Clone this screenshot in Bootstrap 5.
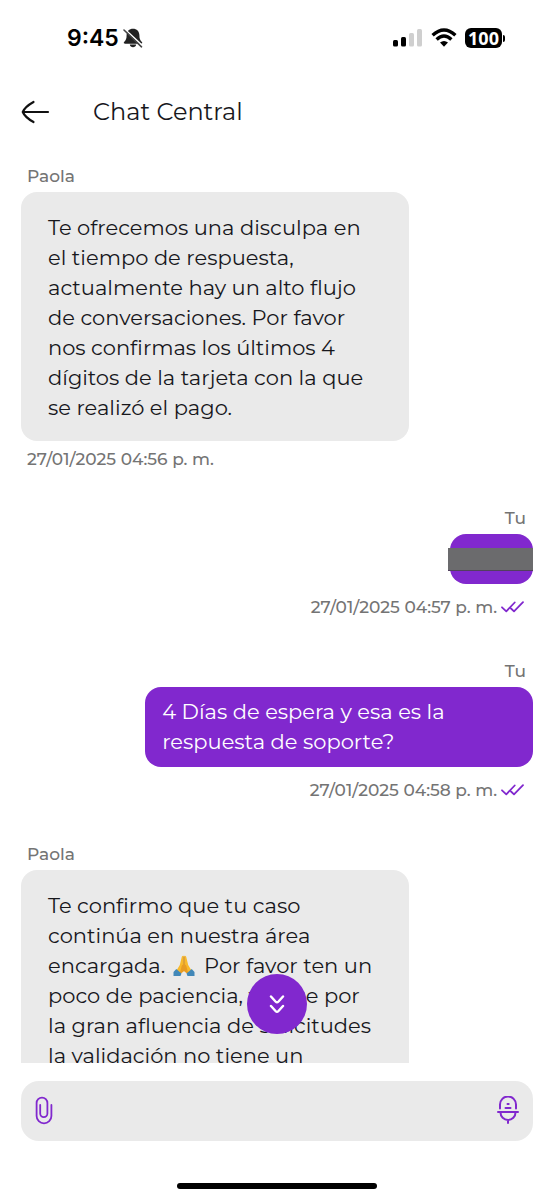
<!DOCTYPE html>
<html lang="es">
<head>
<meta charset="utf-8">
<meta name="viewport" content="width=device-width, initial-scale=1">
<title>Chat Central</title>
<link href="https://cdn.jsdelivr.net/npm/bootstrap@5.3.0/dist/css/bootstrap.min.css" rel="stylesheet">
<style>
  :root { --purple: #8128ce; --bubble: #eaeaea; --ink: #17171c; --muted: #747474; }
  body { font-family: Montserrat, Inter, sans-serif; color: var(--ink); background: #fff; }
  .status-row { padding: 24px 49px 0 67px; height: 76px; }
  .status-icons { height: 28px; }
  .clock { font: 600 23px/28px Inter, sans-serif; color: #000; }
  .battery { width: 37px; height: 20px; border-radius: 6px; background: #000; color: #fff; font: 700 18px/20px "Open Sans", sans-serif; }
  .battery-tip { width: 2px; height: 7px; border-radius: 0 2px 2px 0; background: #000; margin-left: 1px; }
  .title-row { padding: 0 21px; height: 72px; gap: 43px; }
  .title-row h1 { font-size: 24px; line-height: 32px; font-weight: 400; }
  .chat { padding: 18px 21px 0; }
  .meta { font-size: 17px; line-height: 20px; font-weight: 500; color: var(--muted); padding: 0 6px; white-space: nowrap; }
  .bubble { width: 70vw; border-radius: 16px; font-size: 21px; line-height: 30px; margin-top: 6px; white-space: nowrap; }
  .msg-in { margin-bottom: 39px; }
  .msg-in .bubble { background: var(--bubble); padding: 21px 27px 18px; }
  .msg-in .stamp { margin-top: 8px; }
  .msg-out { margin-bottom: 44px; }
  .msg-out .bubble { background: var(--purple); color: #fff; padding: 10px 17px; }
  .msg-out .meta { padding-right: 7px; }
  .msg-out .stamp { margin-top: 13px; padding-right: 9px; gap: 4px; }
  .msg-out .bubble-short { width: 83px; height: 50px; padding: 14px 0 0; }
  .redaction { height: 23px; margin-left: -2px; background: #6b6b6d; border-bottom: 1px solid #51405f; }
  .jump { width: 60px; height: 60px; background: var(--purple); bottom: 29px; }
  .composer { margin: 18px 21px 0; height: 60px; border-radius: 18px; background: var(--bubble); padding: 0 14px; }
  .composer input { min-width: 0; font-size: 21px; }
  .home-area { height: 59px; padding-bottom: 11px; }
  .home-bar { width: 36%; height: 6px; border-radius: 3px; background: #000; }
  svg { display: block; flex: none; }
  svg.prayer { display: inline-block; vertical-align: -4px; margin: 0 4px 0 2px; }
</style>
</head>
<body>
<div class="vh-100 d-flex flex-column overflow-hidden">
  <div class="status-row d-flex justify-content-between align-items-start flex-shrink-0">
    <div class="d-flex align-items-center gap-1">
      <span class="clock">9:45</span>
      <svg width="20" height="20" viewBox="0 0 20 20" aria-hidden="true">
        <path fill="#222" d="M10 .8C6.200.8 3.600 3.500 3.600 7.500c0 3.200-.8 4.800-2.500 6.500-.7.700-.3 1.700.7 1.700h16.400c1 0 1.400-1 .7-1.700-1.700-1.700-2.500-3.300-2.500-6.500C16.400 3.500 13.800.8 10 .8zM6.800 16.500h6.400c-.3 3.700-6.100 3.700-6.400 0z"/>
        <path d="M1 .5 20 18.200" stroke="#fff" stroke-width="1.600"/>
        <path d="M1 2 18.500 18.800" stroke="#444" stroke-width="1.600" stroke-linecap="round"/>
      </svg>
    </div>
    <div class="status-icons d-flex align-items-center">
      <svg class="me-2" width="30" height="20" viewBox="0 0 30 20" aria-hidden="true">
        <rect x="0" y="12" width="5" height="6.500" rx="1.500"/><rect x="8" y="9" width="5" height="9.500" rx="1.500"/>
        <g fill="#cfcfcf"><rect x="16" y="5" width="5" height="13.500" rx="1.500"/><rect x="24" y="1" width="5" height="17.500" rx="1.500"/></g>
      </svg>
      <svg class="me-2" width="26" height="20" viewBox="0 0 26 20" aria-hidden="true">
        <g fill="none" stroke="#000" stroke-width="3.400"><path d="M1.600 7.300Q13-3.200 24.400 7.300"/><path d="M5.600 11.400Q13 4.600 20.400 11.400"/></g>
        <path d="M9 14.500Q13 11.300 17 14.500L13 18.800z"/>
      </svg>
      <span class="battery d-flex align-items-center justify-content-center">100</span><span class="battery-tip"></span>
    </div>
  </div>

  <header class="title-row d-flex align-items-center flex-shrink-0">
    <button type="button" class="btn p-0 border-0" aria-label="Volver">
      <svg width="29" height="24" viewBox="0 0 29 24" fill="none" stroke="#111" stroke-width="2.200" stroke-linecap="round"><path d="M2 12h25M12.500 2C8 4.500 3.200 8.500 1.800 12 3.200 15.500 8 19.500 12.500 22"/></svg>
    </button>
    <h1 class="m-0">Chat Central</h1>
  </header>

  <div class="flex-grow-1 position-relative overflow-hidden">
    <main class="chat d-flex flex-column">
      <article class="msg-in d-flex flex-column align-items-start">
        <div class="meta">Paola</div>
        <div class="bubble">Te ofrecemos una disculpa en<br>el tiempo de respuesta,<br>actualmente hay un alto flujo<br>de conversaciones. Por favor<br>nos confirmas los últimos 4<br>dígitos de la tarjeta con la que<br>se realizó el pago.</div>
        <time class="meta stamp">27/01/2025 04:56 p. m.</time>
      </article>

      <article class="msg-out d-flex flex-column align-items-end">
        <div class="meta">Tu</div>
        <div class="bubble bubble-short"><div class="redaction"></div></div>
        <div class="meta stamp d-flex align-items-center"><time>27/01/2025 04:57 p. m.</time>
          <svg width="23" height="12" viewBox="0 0 23 12" fill="none" stroke="#8128ce" stroke-width="1.800" stroke-linecap="round" stroke-linejoin="round"><path d="M1 6.300 5.300 10.300 13.700 1.500M10 7.500 13 10.300 22 1.200"/></svg>
        </div>
      </article>

      <article class="msg-out d-flex flex-column align-items-end">
        <div class="meta">Tu</div>
        <div class="bubble">4 Días de espera y esa es la<br>respuesta de soporte?</div>
        <div class="meta stamp d-flex align-items-center"><time>27/01/2025 04:58 p. m.</time>
          <svg width="23" height="12" viewBox="0 0 23 12" fill="none" stroke="#8128ce" stroke-width="1.800" stroke-linecap="round" stroke-linejoin="round"><path d="M1 6.300 5.300 10.300 13.700 1.500M10 7.500 13 10.300 22 1.200"/></svg>
        </div>
      </article>

      <article class="msg-in d-flex flex-column align-items-start">
        <div class="meta">Paola</div>
        <div class="bubble">Te confirmo que tu caso<br>continúa en nuestra área<br>encargada. <svg class="prayer" width="22" height="22" viewBox="0 0 22 22" role="img" aria-label="Manos juntas"><path fill="#f8b92c" d="M10.700 1C9.600.5 8.800 1.200 8.500 3L6.800 10 3.500 15.500 6.500 19.500 10.900 16zM11.300 1c1.100-.5 1.900.2 2.200 2l1.700 7 3.300 5.500-3 4-4.400-3.500z"/><path d="M11 1.500V16" stroke="#c87e16" stroke-width="1"/><path fill="#e99b22" d="M8.800 10.500 10.700 9v7.200L6.500 19.500zM13.200 10.500 11.300 9v7.200l4.200 3.300z"/><path fill="#4288b8" d="M3.300 14 8.500 18.500 7.500 21H.5V17zM18.700 14 13.500 18.500l1 2.500h7V17z"/></svg> Por favor ten un<br>poco de paciencia, ya que por<br>la gran afluencia de solicitudes<br>la validación no tiene un</div>
      </article>
    </main>
    <button type="button" class="jump btn rounded-circle border-0 p-0 position-absolute start-50 translate-middle-x d-flex align-items-center justify-content-center" aria-label="Ir al final">
      <svg width="16" height="20" viewBox="0 0 16 20" fill="none" stroke="#fff" stroke-width="2.400" stroke-linecap="round" stroke-linejoin="round"><path d="M2 2.500 6.500 7.500Q8 9 9.500 7.500L14 2.500M2 12 6.500 17Q8 18.500 9.500 17L14 12"/></svg>
    </button>
  </div>

  <form class="composer d-flex align-items-center flex-shrink-0">
    <button type="button" class="btn p-0 border-0" aria-label="Adjuntar archivo">
      <svg width="18" height="30" viewBox="0 0 18 30" fill="none" stroke="#8128ce" stroke-width="1.800" stroke-linecap="round"><path d="M5.200 9V17.500a3.500 3.500 0 0 0 7.200 0V7a5.400 5.400 0 0 0-10.800 0V20a7.400 7.400 0 0 0 14.800 0V9"/></svg>
    </button>
    <input type="text" class="form-control border-0 bg-transparent shadow-none" aria-label="Mensaje">
    <button type="button" class="btn p-0 border-0" aria-label="Grabar audio">
      <svg width="22" height="30" viewBox="0 0 22 30" fill="none" stroke="#8128ce" stroke-width="2" stroke-linecap="round"><path d="M3 12.500V8.500a8 8 0 0 1 16 0v4M1 16H21M3.500 16.500a7.500 7.500 0 0 0 15 0M11 24v3M10.500 8h1.200M8.500 12h5"/></svg>
    </button>
  </form>
  <div class="home-area d-flex align-items-end justify-content-center flex-shrink-0"><div class="home-bar"></div></div>
</div>
<script src="https://cdn.jsdelivr.net/npm/bootstrap@5.3.0/dist/js/bootstrap.bundle.min.js"></script>
</body>
</html>
